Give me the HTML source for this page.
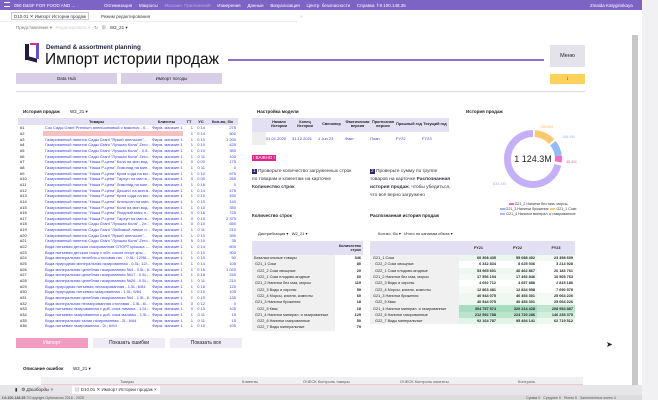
<!DOCTYPE html>
<html><head><meta charset="utf-8"><style>
*{margin:0;padding:0;box-sizing:border-box}
body{width:658px;height:400px;overflow:hidden;background:#fff;font-family:"Liberation Sans","Noto Sans CJK SC",sans-serif;color:#222;position:relative}
.a{position:absolute;white-space:nowrap}
.t{font-size:4.5px}
.b{font-weight:bold}
table{border-collapse:collapse;font-size:4px}
td,th{white-space:nowrap;overflow:hidden;padding:0 2px}
.lt td{height:5.67px;line-height:5px;padding-top:0;padding-bottom:0}
.lt tr{height:5.67px}
.lt tr:nth-child(odd) td{background-clip:padding-box}
.lt .p{color:#3b3bd8}
.lt .r{text-align:right;color:#3b3bd8}
.gt td{height:6.3px;line-height:6px}
</style></head><body>
<!-- top bar -->
<div class="a" style="left:0;top:0;width:642px;height:10px;background:#7d63c4"></div>
<div class="a t" style="left:4px;top:2px;width:6px;height:5px;border-top:1px solid #fff;border-bottom:1px solid #fff"></div>
<div class="a t" style="left:14px;top:2.5px;color:#fff">050 D&amp;SF FOR FOOD AND ...</div>
<div class="a t" style="left:104px;top:2.5px;color:#fff;word-spacing:1px">Оптимизация &nbsp; Макросы &nbsp; <span style="color:#b9a8e6">Магазин Приложений</span> &nbsp; Измерения &nbsp; Данные &nbsp; Визуализация &nbsp; Центр безопасности &nbsp; Справка f-9.100.148.35</div>
<div class="a t" style="left:590px;top:2.5px;color:#fff">Zinaida Katyginskaya</div>
<div class="a" style="left:642px;top:0;width:16px;height:400px;background:#f1f1f3"></div>
<!-- tabs -->
<div class="a t" style="left:11px;top:12px;border:1px solid #ccc;padding:0 2px;height:8px;line-height:7px;color:#334">D10.01 ✕ Импорт Истории продаж</div>
<div class="a t" style="left:101px;top:13.5px;color:#444">Режим редактирования</div>
<div class="a t" style="left:300px;top:14px;color:#bbb">×</div>
<div class="a t" style="left:16px;top:25px;color:#777">Представление ▾ &nbsp; <span style="color:#ccc">Редактировать ▾</span> &nbsp; ↻ &nbsp; ▦ &nbsp; <span style="color:#333">W2_21 ▾</span></div>
<div class="a" style="left:0;top:21px;width:298px;height:1px;background:#eee"></div>
<!-- scrollbar -->
<div class="a" style="left:632px;top:35px;width:6px;height:365px;background:#c8c8c8"></div>
<!-- header -->
<div class="a" style="left:25px;top:44px;width:4px;height:16px;background:#1e1e3c"></div>
<div class="a" style="left:25px;top:57px;width:12px;height:4px;background:#1e1e3c;transform:skewY(15deg)"></div>
<div class="a" style="left:36px;top:43px;width:3px;height:16px;background:#6a4fc8"></div>
<div class="a" style="left:30px;top:43px;width:7px;height:2px;background:#e0288a"></div>
<div class="a b" style="left:46px;top:44px;font-size:6.3px;color:#1e1e46">Demand &amp; assortment planning</div>
<div class="a" style="left:45px;top:51px;font-size:15.5px;color:#111">Импорт истории продаж</div>
<div class="a" style="left:228px;top:59px;width:316px;height:1.5px;background:#8a70c8"></div>
<div class="a t" style="left:550px;top:45px;width:35px;height:22px;background:#e4e2ea;text-align:center;line-height:22px;font-size:5.5px">Меню</div>
<div class="a t" style="left:550px;top:74px;width:35px;height:10px;background:#fdd15a;text-align:center;line-height:10px">i</div>
<div class="a t" style="left:16px;top:73px;width:101px;height:11px;background:#d8cfe6;text-align:center;line-height:11px">Data Hub</div>
<div class="a t" style="left:121px;top:73px;width:101px;height:11px;background:#d8cfe6;text-align:center;line-height:11px">Импорт погоды</div>
<div class="a" style="left:16px;top:91px;width:569px;height:1px;background:#dcd4ee"></div>
<!-- left -->
<div class="a t b" style="left:23px;top:109px">История продаж</div>
<div class="a t" style="left:70px;top:109px">W2_21 ▾</div>
<div class="a" style="left:18px;top:118px;width:220px;height:212px;overflow:hidden">
<table class="lt" style="width:220px;table-layout:fixed">
<colgroup><col style="width:25px"><col style="width:107px"><col style="width:33px"><col style="width:12px"><col style="width:12px"><col style="width:31px"></colgroup>
<tr style="background:#e4e0f4;height:7px"><th style="height:7px;line-height:7px"></th><th>Товары</th><th>Клиенты</th><th>ТТ</th><th>УС</th><th>Кол-во, б/к</th></tr>
<tr><td>#1</td><td class="p">Сок Сады Grant Premium апельсиновый с мякотью - 0...</td><td class="p">Фирм. магазин 1</td><td class="r">1</td><td class="r">0 14</td><td class="r">275</td></tr>
<tr><td>#2</td><td style="background:#f6c0c0"></td><td style="background:#f6c0c0"></td><td class="r">1</td><td class="r">0 14</td><td class="r">500</td></tr>
<tr><td>#3</td><td class="p">Газированный напиток Сады Grant "Яркий апельсин"...</td><td class="p">Фирм. магазин 1</td><td class="r">1</td><td class="r">0 10</td><td class="r">1 200</td></tr>
<tr><td>#4</td><td class="p">Газированный напиток Сады Grant "Лучшая Кола" Zero...</td><td class="p">Фирм. магазин 1</td><td class="r">1</td><td class="r">0 10</td><td class="r">425</td></tr>
<tr><td>#5</td><td class="p">Газированный напиток Сады Grant "Лучшая Кола" - 0.5...</td><td class="p">Фирм. магазин 1</td><td class="r">1</td><td class="r">0 10</td><td class="r">350</td></tr>
<tr><td>#6</td><td class="p">Газированный напиток Сады Grant "Лучшая Кола" Zero...</td><td class="p">Фирм. магазин 1</td><td class="r">1</td><td class="r">0 11</td><td class="r">100</td></tr>
<tr><td>#7</td><td class="p">Газированный напиток "Наша Р-цепа" Кола на мин.вод...</td><td class="p">Фирм. магазин 1</td><td class="r">0</td><td class="r">0 00</td><td class="r">175</td></tr>
<tr><td>#8</td><td class="p">Газированный напиток "Наша Р-цепа" Лимонад на мин...</td><td class="p">Фирм. магазин 1</td><td class="r">1</td><td class="r">0 11</td><td class="r">0</td></tr>
<tr><td>#9</td><td class="p">Газированный напиток "Наша Р-цепа" Крем сода на ми...</td><td class="p">Фирм. магазин 1</td><td class="r">1</td><td class="r">0 10</td><td class="r">575</td></tr>
<tr><td>#10</td><td class="p">Газированный напиток "Наша Р-цепа" Тархун на мин.в...</td><td class="p">Фирм. магазин 1</td><td class="r">0</td><td class="r">0 00</td><td class="r">265</td></tr>
<tr><td>#11</td><td class="p">Газированный напиток "Наша Р-цепа" Лимонад на мин...</td><td class="p">Фирм. магазин 1</td><td class="r">1</td><td class="r">0 16</td><td class="r">0</td></tr>
<tr><td>#12</td><td class="p">Газированный напиток "Наша Р-цепа" Дюшес! на мин.в...</td><td class="p">Фирм. магазин 1</td><td class="r">1</td><td class="r">0 14</td><td class="r">475</td></tr>
<tr><td>#13</td><td class="p">Газированный напиток "Наша Р-цепа" Крем сода на ми...</td><td class="p">Фирм. магазин 1</td><td class="r">1</td><td class="r">0 10</td><td class="r">450</td></tr>
<tr><td>#14</td><td class="p">Газированный напиток "Наша Р-цепа" Апельсин на мин...</td><td class="p">Фирм. магазин 1</td><td class="r">1</td><td class="r">0 10</td><td class="r">140</td></tr>
<tr><td>#15</td><td class="p">Газированный напиток "Наша Р-цепа" Кола на мин.вод...</td><td class="p">Фирм. магазин 1</td><td class="r">1</td><td class="r">0 10</td><td class="r">350</td></tr>
<tr><td>#16</td><td class="p">Газированный напиток "Наша Р-цепа" Ягодный микс н...</td><td class="p">Фирм. магазин 1</td><td class="r">0</td><td class="r">0 16</td><td class="r">725</td></tr>
<tr><td>#17</td><td class="p">Газированный напиток "Наша Р-цепа" Тархун на мин.в...</td><td class="p">Фирм. магазин 1</td><td class="r">0</td><td class="r">0 10</td><td class="r">2 375</td></tr>
<tr><td>#18</td><td class="p">Газированный напиток Сады Grant "Лучшая Кола" - 2л...</td><td class="p">Фирм. магазин 1</td><td class="r">0</td><td class="r">0 10</td><td class="r">650</td></tr>
<tr><td>#19</td><td class="p">Газированный напиток Сады Grant "Любимый лимон л...</td><td class="p">Фирм. магазин 1</td><td class="r">1</td><td class="r">0 11</td><td class="r">210</td></tr>
<tr><td>#20</td><td class="p">Газированный напиток Сады Grant "Яркий апельсин"...</td><td class="p">Фирм. магазин 1</td><td class="r">1</td><td class="r">0 10</td><td class="r">390</td></tr>
<tr><td>#21</td><td class="p">Газированный напиток Сады Grant "Лучшая Кола" Zero...</td><td class="p">Фирм. магазин 1</td><td class="r">5</td><td class="r">0 10</td><td class="r">35</td></tr>
<tr><td>#22</td><td class="p">Вода питьевая детская газированная СПОРТ крышка -...</td><td class="p">Фирм. магазин 1</td><td class="r">1</td><td class="r">0 14</td><td class="r">600</td></tr>
<tr><td>#23</td><td class="p">Вода питьевая детская газир.с ябл. соком спорт кры...</td><td class="p">Фирм. магазин 1</td><td class="r">1</td><td class="r">0 10</td><td class="r">300</td></tr>
<tr><td>#24</td><td class="p">Вода минеральная лечебно-столовая газ. - 0.5L; 12/96...</td><td class="p">Фирм. магазин 1</td><td class="r">1</td><td class="r">0 10</td><td class="r">90</td></tr>
<tr><td>#25</td><td class="p">Вода природная минеральная газированная - 0.5L; 12/...</td><td class="p">Фирм. магазин 1</td><td class="r">1</td><td class="r">0 14</td><td class="r">105</td></tr>
<tr><td>#26</td><td class="p">Вода минеральная целебная газированная №4 - 0.5L; 6...</td><td class="p">Фирм. магазин 1</td><td class="r">1</td><td class="r">0 16</td><td class="r">1 020</td></tr>
<tr><td>#27</td><td class="p">Вода минеральная целебная газированная №17 - 0.5L;...</td><td class="p">Фирм. магазин 1</td><td class="r">1</td><td class="r">0 16</td><td class="r">240</td></tr>
<tr><td>#28</td><td class="p">Вода минеральная целебная газированная №26 - 0.5L;...</td><td class="p">Фирм. магазин 1</td><td class="r">1</td><td class="r">0 11</td><td class="r">210</td></tr>
<tr><td>#29</td><td class="p">Вода природная питьевая негазированная - 1.5L; 6/84</td><td class="p">Фирм. магазин 1</td><td class="r">1</td><td class="r">0 16</td><td class="r">120</td></tr>
<tr><td>#30</td><td class="p">Вода природная питьевая газированная - 1.5L; 6/84</td><td class="p">Фирм. магазин 1</td><td class="r">1</td><td class="r">0 10</td><td class="r">105</td></tr>
<tr><td>#31</td><td class="p">Вода минеральная целебная газированная №4 - 1.5L; 6...</td><td class="p">Фирм. магазин 1</td><td class="r">1</td><td class="r">0 10</td><td class="r">135</td></tr>
<tr><td>#32</td><td class="p">Вода минеральная негазированная столовая - 1.5L; 6/...</td><td class="p">Фирм. магазин 1</td><td class="r">0</td><td class="r">0 12</td><td class="r">0</td></tr>
<tr><td>#33</td><td class="p">Вода питьевая газированная с доб. сока лимона - 1.5L;...</td><td class="p">Фирм. магазин 1</td><td class="r">0</td><td class="r">0 13</td><td class="r">105</td></tr>
<tr><td>#34</td><td class="p">Вода питьевая газированная с доб. сока малины - 1.5L;...</td><td class="p">Фирм. магазин 1</td><td class="r">1</td><td class="r">0 11</td><td class="r">15</td></tr>
<tr><td>#35</td><td class="p">Вода минеральная талая газированная - 2L; 6/64</td><td class="p">Фирм. магазин 1</td><td class="r">1</td><td class="r">0 11</td><td class="r">15</td></tr>
<tr><td>#36</td><td class="p">Вода питьевая газированная - 2L; 6/64</td><td class="p">Фирм. магазин 1</td><td class="r">1</td><td class="r">0 10</td><td class="r">105</td></tr>
</table></div>
<div class="a t" style="left:16px;top:338px;width:72px;height:10px;background:#f29cc2;color:#fff;text-align:center;line-height:10px;font-size:5px">Импорт</div>
<div class="a t" style="left:93px;top:338px;width:72px;height:10px;background:#efecf6;text-align:center;line-height:10px;font-size:5px">Показать ошибки</div>
<div class="a t" style="left:170px;top:338px;width:72px;height:10px;background:#efecf6;text-align:center;line-height:10px;font-size:5px">Показать все</div>
<div class="a t b" style="left:23px;top:366px">Описание ошибок</div>
<div class="a t" style="left:73px;top:366px">W2_21 ▾</div>
<div class="a" style="left:18px;top:377px;width:565px;height:8px;background:#f0f0f2"></div>
<div class="a" style="left:41px;top:384px;width:542px;height:1px;background:#f0c8d0"></div>
<div class="a" style="left:18px;top:377px;width:23px;height:8px;background:#fff"></div>
<div class="a t" style="left:120px;top:378.5px;font-size:4px;color:#555">Товары</div>
<div class="a t" style="left:242px;top:378.5px;font-size:4px;color:#555">Клиенты</div>
<div class="a t" style="left:303px;top:378.5px;font-size:4px;color:#555">ОЧЕСК Контроль товары</div>
<div class="a t" style="left:400px;top:378.5px;font-size:4px;color:#555">ОЧЕСК Контроль клиенты</div>
<div class="a t" style="left:518px;top:378.5px;font-size:4px;color:#555">Контроль</div>
<!-- bottom tab bar -->
<div class="a" style="left:0;top:385px;width:642px;height:10px;background:#e6e6e8"></div>
<div class="a t" style="left:15px;top:387px;color:#333">▮ &nbsp; ⚙ <i>Дашборды</i> × &nbsp;</div>
<div class="a t" style="left:72px;top:386px;height:8px;background:#fff;padding:1px 3px;color:#333">▤ D10.01 ✕ Импорт Истории продаж ×</div>
<div class="a" style="left:0;top:395px;width:642px;height:5px;background:#dcdcde"></div>
<div class="a" style="left:2px;top:395.5px;font-size:3.6px;color:#555"><b>f-9.100.148.35</b> ©Copyright Optimacros 2018 - 2025</div>
<div class="a" style="left:526px;top:395.5px;font-size:3.6px;color:#555">Сумма 0 &nbsp; Среднее 0 &nbsp; Ячеек 5 &nbsp; Заполненных ячеек 4</div>
<!-- middle -->
<div class="a t b" style="left:257px;top:109px">Настройка модели</div>
<div class="a" style="left:252px;top:118px;width:197px;height:14px;background:#e4e0f4"></div>
<div class="a" style="left:252px;top:132px;width:14px;height:13px;background:#eee"></div>
<div class="a b" style="left:266px;top:119.5px;font-size:3.8px;width:182px;display:flex;text-align:center;line-height:4.5px">
<div style="width:26px">Начало<br>Истории</div><div style="width:26px">Конец<br>Истории</div><div style="width:27px;line-height:9px">Свичовер</div><div style="width:25px">Фактическая<br>версия</div><div style="width:26px">Прогнозная<br>версия</div><div style="width:26px;line-height:9px">Прошлый год</div><div style="width:26px;line-height:9px">Текущий год</div></div>
<div class="a" style="left:266px;top:136px;font-size:4px;width:182px;display:flex;color:#3b3bd8">
<div style="width:26px">01.01.2020</div><div style="width:26px">31.12.2021</div><div style="width:27px">1 Jun 23</div><div style="width:25px">Факт</div><div style="width:26px">План</div><div style="width:26px">FY22</div><div style="width:26px">FY23</div></div>
<div class="a" style="left:252px;top:155px;height:6px;background:#e0288a;color:#fff;font-size:4.5px;line-height:6px;padding:0 1px">! ВАЖНО !</div>
<div class="a" style="left:252px;top:168px;font-size:4.8px;line-height:8px;color:#334"><span style="background:#2a2470;color:#fff;padding:0 1px">1</span> Проверьте количество загруженных строк<br>по товарам и клиентам на карточке<br><b>Количество строк</b></div>
<div class="a" style="left:370px;top:168px;font-size:4.8px;line-height:8px;color:#334"><span style="background:#2a2470;color:#fff;padding:0 1px">2</span> Проверьте сумму по группе<br>товаров на карточке <b>Распознанная<br>история продаж</b>, чтобы убедиться,<br>что всё верно загружено</div>
<div class="a t b" style="left:252px;top:213px">Количество строк</div>
<div class="a t b" style="left:370px;top:213px">Распознанная история продаж</div>
<div class="a" style="left:258px;top:231px;font-size:4px">Дистрибьюция ▾ &nbsp; W2_21 ▾</div>
<div class="a" style="left:378px;top:231px;font-size:4px">Кол-во, б/к ▾ &nbsp; Итого по каналам сбыта ▾</div>
<div class="a" style="left:252px;top:241px;width:111px">
<table class="gt" style="width:111px;font-size:3.8px">
<tr style="background:#e4e0f4"><th style="height:14px"></th><th style="text-align:right;line-height:4.5px">Количество<br>строк</th></tr>
<tr><td style="background:#f0f0f0">Безалкогольные товары</td><td style="text-align:right" class="b">346</td></tr>
<tr><td style="background:#f0f0f0">&nbsp;G21_1 Соки</td><td style="text-align:right" class="b">80</td></tr>
<tr><td style="background:#f0f0f0">&nbsp;&nbsp;&nbsp;G22_2 Соки овощные</td><td style="text-align:right" class="b">20</td></tr>
<tr><td style="background:#f0f0f0">&nbsp;&nbsp;&nbsp;G22_1 Соки плодово-ягодные</td><td style="text-align:right" class="b">60</td></tr>
<tr><td style="background:#f0f0f0">&nbsp;G21_2 Напитки без газа, морсы</td><td style="text-align:right" class="b">119</td></tr>
<tr><td style="background:#f0f0f0">&nbsp;&nbsp;&nbsp;G22_3 Воды и сиропы</td><td style="text-align:right" class="b">59</td></tr>
<tr><td style="background:#f0f0f0">&nbsp;&nbsp;&nbsp;G22_4 Морсы, киселя, компоты</td><td style="text-align:right" class="b">60</td></tr>
<tr><td style="background:#f0f0f0">&nbsp;G21_3 Напитки брожения</td><td style="text-align:right" class="b">18</td></tr>
<tr><td style="background:#f0f0f0">&nbsp;&nbsp;&nbsp;G22_5 Квас</td><td style="text-align:right" class="b">18</td></tr>
<tr><td style="background:#f0f0f0">&nbsp;G21_4 Напитки минерал. и газированные</td><td style="text-align:right" class="b">129</td></tr>
<tr><td style="background:#f0f0f0">&nbsp;&nbsp;&nbsp;G22_6 Напитки газированные</td><td style="text-align:right" class="b">50</td></tr>
<tr><td style="background:#f0f0f0">&nbsp;&nbsp;&nbsp;G22_7 Воды минеральные</td><td style="text-align:right" class="b">79</td></tr>
</table></div>
<div class="a" style="left:370px;top:241px;width:205px">
<table class="gt" style="width:205px;table-layout:fixed;font-size:3.8px">
<colgroup><col style="width:89px"><col style="width:39px"><col style="width:39px"><col style="width:38px"></colgroup>
<tr style="background:#e4e0f4"><th style="height:14px"></th><th>FY21</th><th>FY22</th><th>FY23</th></tr>
<tr><td style="background:#f0f0f0">&nbsp;G21_1 Соки</td><td style="text-align:right;background:#eaf6ee" class="b">60 308 435</td><td style="text-align:right;background:#eaf6ee" class="b">55 088 402</td><td style="text-align:right;background:#f2faf4" class="b">23 398 609</td></tr>
<tr><td style="background:#f0f0f0">&nbsp;&nbsp;&nbsp;G22_2 Соки овощные</td><td style="text-align:right" class="b">6 342 834</td><td style="text-align:right" class="b">8 625 536</td><td style="text-align:right" class="b">3 214 928</td></tr>
<tr><td style="background:#f0f0f0">&nbsp;&nbsp;&nbsp;G22_1 Соки плодово-ягодные</td><td style="text-align:right;background:#eef8f1" class="b">53 965 601</td><td style="text-align:right;background:#eef8f1" class="b">46 462 867</td><td style="text-align:right" class="b">20 183 761</td></tr>
<tr><td style="background:#f0f0f0">&nbsp;G21_2 Напитки без газа, морсы</td><td style="text-align:right;background:#f4faf6" class="b">17 556 194</td><td style="text-align:right;background:#f4faf6" class="b">17 492 846</td><td style="text-align:right" class="b">10 505 763</td></tr>
<tr><td style="background:#f0f0f0">&nbsp;&nbsp;&nbsp;G22_3 Воды и сиропы</td><td style="text-align:right" class="b">4 692 712</td><td style="text-align:right" class="b">4 657 888</td><td style="text-align:right" class="b">2 815 186</td></tr>
<tr><td style="background:#f0f0f0">&nbsp;&nbsp;&nbsp;G22_4 Морсы, киселя, компоты</td><td style="text-align:right;background:#f6fbf7" class="b">12 863 481</td><td style="text-align:right;background:#f6fbf7" class="b">12 834 958</td><td style="text-align:right" class="b">7 690 578</td></tr>
<tr><td style="background:#f0f0f0">&nbsp;G21_3 Напитки брожения</td><td style="text-align:right;background:#eef8f1" class="b">40 544 075</td><td style="text-align:right;background:#eef8f1" class="b">40 453 301</td><td style="text-align:right;background:#f4faf6" class="b">25 064 226</td></tr>
<tr><td style="background:#f0f0f0">&nbsp;&nbsp;&nbsp;G22_5 Квас</td><td style="text-align:right;background:#eef8f1" class="b">40 544 075</td><td style="text-align:right;background:#eef8f1" class="b">40 453 301</td><td style="text-align:right;background:#f4faf6" class="b">25 064 226</td></tr>
<tr><td style="background:#f0f0f0">&nbsp;G21_4 Напитки минерал. и газированные</td><td style="text-align:right;background:#a8dcc0" class="b">304 757 574</td><td style="text-align:right;background:#a8dcc0" class="b">320 214 428</td><td style="text-align:right;background:#c0e6d0" class="b">208 954 887</td></tr>
<tr><td style="background:#f0f0f0">&nbsp;&nbsp;&nbsp;G22_6 Напитки газированные</td><td style="text-align:right;background:#bce4cc" class="b">212 592 788</td><td style="text-align:right;background:#bce4cc" class="b">224 720 286</td><td style="text-align:right;background:#d4eedf" class="b">146 235 375</td></tr>
<tr><td style="background:#f0f0f0">&nbsp;&nbsp;&nbsp;G22_7 Воды минеральные</td><td style="text-align:right;background:#e2f4e8" class="b">92 164 787</td><td style="text-align:right;background:#e2f4e8" class="b">95 494 141</td><td style="text-align:right;background:#eef8f1" class="b">62 719 512</td></tr>
</table></div>
<!-- chart -->
<div class="a t b" style="left:466px;top:109px">История продаж</div>
<svg class="a" style="left:490px;top:115px" width="100" height="80" viewBox="0 0 100 80">
<g transform="rotate(-88 43 44)" fill="none" stroke-width="7">
<circle cx="43" cy="44" r="25.5" stroke="#c4b0f8" stroke-dasharray="0 45 114 10"/>
<circle cx="43" cy="44" r="25.5" stroke="#fcc870" stroke-dasharray="0 1 19 141"/>
<circle cx="43" cy="44" r="25.5" stroke="#94baf2" stroke-dasharray="0 22 14 125"/>
<circle cx="44.5" cy="44" r="25.5" stroke="#f46ac8" stroke-dasharray="0 37.5 6 117"/>
</g>
<text x="43" y="47" font-size="9" text-anchor="middle" font-family="Liberation Sans" fill="#222">1 124.3M</text>
<text x="50" y="13" font-size="3.8" fill="#f8b860" font-family="Liberation Sans">138.8M</text>
<text x="72" y="23" font-size="3.8" fill="#90b4f0" font-family="Liberation Sans">106.1M</text>
<text x="76" y="48" font-size="3.8" fill="#f060c0" font-family="Liberation Sans">45.4M</text>
<text x="3" y="70" font-size="3.8" fill="#b8a0f0" font-family="Liberation Sans">833.1M</text>
</svg>
<div class="a" style="left:488px;top:202px;font-size:3.6px;line-height:5px;text-align:center;width:100px;color:#333">
<span style="display:inline-block;width:5px;height:2px;background:#f46ac8"></span> G21_2 Напитки без газа, морсы<br>
<span style="display:inline-block;width:5px;height:2px;background:#94baf2"></span> G21_3 Напитки брожения &nbsp;<span style="display:inline-block;width:5px;height:2px;background:#fcc870"></span> G21_1 Соки<br>
<span style="display:inline-block;width:5px;height:2px;background:#c4b0f8"></span> G21_4 Напитки минерал. и газированные</div>
<div class="a" style="left:606px;top:340px;font-size:8px">➤</div>
</body></html>
